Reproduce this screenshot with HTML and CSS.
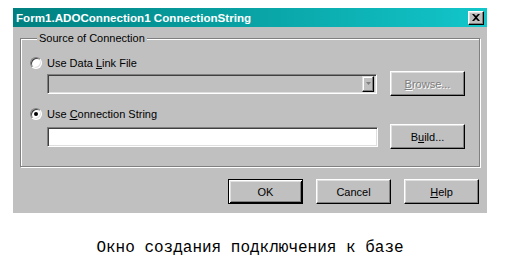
FILE: index.html
```html
<!DOCTYPE html>
<html lang="ru">
<head>
    <meta charset="UTF-8">
    <title>Form1.ADOConnection1 ConnectionString</title>
    <link rel="stylesheet" href="styles.css">
</head>
<body>
    <div class="page">
        <div class="dialog">
            <div class="titlebar">
                <span class="title">Form1.ADOConnection1 ConnectionString</span>
                <span class="close">
                    <svg width="8" height="7" viewBox="0 0 8 7"><path d="M0 0h2l2 2 2-2h2L5 3.5 8 7H6L4 5 2 7H0l3-3.5z" fill="#000"/></svg>
                </span>
            </div>
            <div class="dialog-body">
                <div class="group">
                    <div class="group-title">Source of Connection</div>
                    <div class="radio-row">
                        <span class="radio"></span>
                        <span>Use Data <u>L</u>ink File</span>
                    </div>
                    <div class="field-row">
                        <div class="field combo">
                            <span class="combo-btn">
                                <svg width="5" height="3" viewBox="0 0 5 3"><path d="M0 0h5L2.5 3z" fill="#808080"/></svg>
                            </span>
                        </div>
                        <div class="btn disabled"><span><u>B</u>rowse...</span></div>
                    </div>
                    <div class="radio-row">
                        <span class="radio checked"></span>
                        <span>Use <u>C</u>onnection String</span>
                    </div>
                    <div class="field-row second">
                        <div class="field edit"></div>
                        <div class="btn"><span>B<u>u</u>ild...</span></div>
                    </div>
                </div>
                <div class="actions">
                    <div class="btn default">OK</div>
                    <div class="btn">Cancel</div>
                    <div class="btn"><span><u>H</u>elp</span></div>
                </div>
            </div>
        </div>
        <p class="caption">Окно создания подключения к базе</p>
    </div>
</body>
</html>
```

FILE: styles.css
```css
/* Page */
body {
    margin: 0;
    background: #fff;
    font-family: "Liberation Sans", Arial, sans-serif;
    font-size: 11px;
    color: #000;
}

.page {
    width: 474px;
    margin-left: 13px;
    padding-top: 8px;
}

/* Dialog window */
.dialog {
    background: #c0c0c0;
    height: 205px;
    display: flex;
    flex-direction: column;
}

.titlebar {
    height: 19px;
    background: linear-gradient(to right, #008080, #12c6ca);
    display: flex;
    align-items: center;
    justify-content: space-between;
    padding: 0 3px;
    color: #fff;
    font-weight: bold;
    font-size: 11.6px;
}

.close {
    width: 16px;
    height: 14px;
    box-sizing: border-box;
    background: #c0c0c0;
    border: 1px solid;
    border-color: #fff #000 #000 #fff;
    box-shadow: inset -1px -1px #808080, inset 1px 1px #dfdfdf;
    display: flex;
    align-items: center;
    justify-content: center;
}

.dialog-body {
    padding: 11px 7px 0;
}

/* Group box */
.group {
    border: 1px solid #808080;
    box-shadow: inset 1px 1px #fff, 1px 1px #fff;
    padding: 0 14px 17px 9px;
}

.group-title {
    width: fit-content;
    margin: -7px 0 0 7px;
    padding: 0 2px;
    line-height: 13px;
    background: #c0c0c0;
}

.radio-row {
    display: flex;
    align-items: center;
    gap: 5px;
    height: 13px;
    margin-top: 11px;
}

.radio {
    width: 12px;
    height: 12px;
    box-sizing: border-box;
    border-radius: 50%;
    border: 1px solid;
    border-color: #808080 #fff #fff #808080;
    background: #fff;
    box-shadow: inset 1px 1px #404040, inset -1px -1px #dfdfdf;
    display: flex;
    align-items: center;
    justify-content: center;
}

.radio.checked::after {
    content: "";
    width: 4px;
    height: 4px;
    border-radius: 50%;
    background: #000;
}

.field-row {
    display: flex;
    align-items: center;
    justify-content: space-between;
    margin-top: 2px;
    padding-left: 17px;
}

.field-row.second {
    margin-top: 4px;
}

/* Sunken fields */
.field {
    height: 20px;
    box-sizing: border-box;
    border: 1px solid;
    border-color: #808080 #fff #fff #808080;
    box-shadow: inset 1px 1px #404040, inset -1px -1px #dfdfdf;
}

.combo {
    width: 330px;
    background: #c0c0c0;
    display: flex;
    justify-content: flex-end;
    align-items: center;
    padding-right: 2px;
}

.combo-btn {
    width: 12px;
    height: 16px;
    box-sizing: border-box;
    border: 1px solid;
    border-color: #dfdfdf #000 #000 #dfdfdf;
    box-shadow: inset -1px -1px #808080, inset 1px 1px #fff;
    display: flex;
    align-items: center;
    justify-content: center;
}

.edit {
    width: 331px;
    background: #fff;
}

/* Buttons */
.btn {
    width: 75px;
    height: 25px;
    box-sizing: border-box;
    border: 1px solid;
    border-color: #fff #000 #000 #fff;
    box-shadow: inset -1px -1px #808080, inset 1px 1px #dfdfdf;
    display: flex;
    align-items: center;
    justify-content: center;
}

.btn.disabled {
    color: #808080;
    text-shadow: 1px 1px #fff;
}

.btn.default {
    border-color: #000;
    box-shadow: inset 1px 1px #fff, inset -1px -1px #000, inset 2px 2px #dfdfdf, inset -2px -2px #808080;
}

.actions {
    display: flex;
    justify-content: flex-end;
    gap: 13px;
    margin-top: 12px;
    padding-right: 1px;
}

/* Caption under the picture */
.caption {
    margin: 28px 0 0;
    font-family: "Liberation Mono", "Courier New", monospace;
    font-size: 16px;
    line-height: 14px;
    text-align: center;
}
```
